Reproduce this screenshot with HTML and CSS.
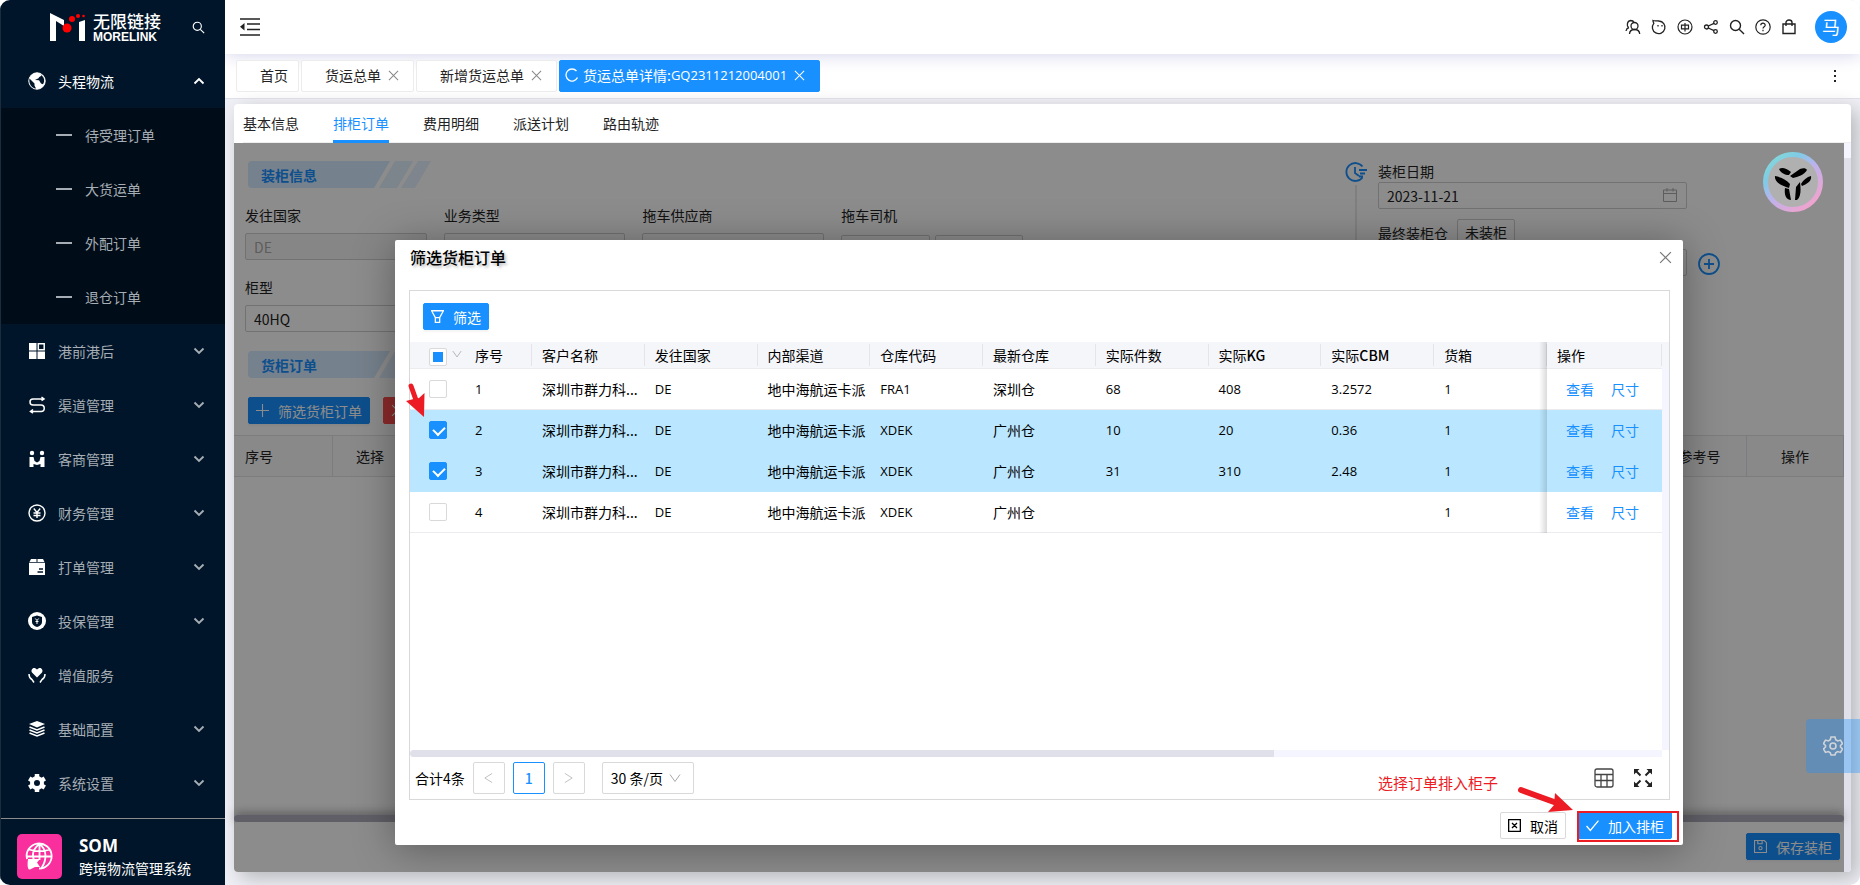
FILE: index.html
```html
<!DOCTYPE html>
<html lang="zh-CN">
<head>
<meta charset="utf-8">
<title>跨境物流管理系统</title>
<link rel="stylesheet" href="styles.css">
</head>
<body>
<!-- shared icons -->
<svg class="defs" aria-hidden="true">
  <symbol id="i-down" viewBox="0 0 12 12"><path d="M1.500 3.500 6 8l4.500-4.500" fill="none" stroke="currentColor" stroke-width="1.900"/></symbol>
  <symbol id="i-caret" viewBox="0 0 12 12"><path d="M1 2.500 6 9.500l5-7" fill="none" stroke="currentColor" stroke-width="1"/></symbol>
  <symbol id="i-close" viewBox="0 0 12 12"><path d="M1 1l10 10M11 1 1 11" fill="none" stroke="currentColor" stroke-width="1.100"/></symbol>
  <symbol id="i-search" viewBox="0 0 16 16"><g fill="none" stroke="currentColor" stroke-width="1.400"><circle cx="6.500" cy="6.500" r="5"/><path d="M10.200 10.200 15 15"/></g></symbol>
</svg>

<div class="app">
  <aside class="side">
    <div class="brand">
      <svg class="brand-mark" viewBox="0 0 36 28">
        <path d="M0 0 14 7v6L6 8v20H0zM29 9l6-2v21h-6z" fill="#fff"/>
        <circle cx="17" cy="15" r="4.500" fill="#f00"/><circle cx="22" cy="6" r="3" fill="#f00"/><circle cx="28" cy="3" r="2" fill="#f00"/><circle cx="33.500" cy="3" r="1.300" fill="#f00"/>
      </svg>
      <div class="brand-name"><strong>无限链接</strong><span>MORELINK</span></div>
      <svg class="brand-search"><use href="#i-search"/></svg>
    </div>

    <nav class="menu">
      <a href="#" class="item active">
        <svg class="ico" viewBox="0 0 18 18"><circle cx="9" cy="9" r="8.200" fill="#fff" stroke="#fff"/><path d="M10 1.200c2 .8 3 1.300 3.500 2-1 1.800-2.500 1.300-3 3L7 8l4 .3 2 3.200 2 .8c1.300-1.800 1.500-4.500.6-6.600L13 2.500zM1.500 6.500l5 5v2l1.500 3C3.500 16 .5 11.500 1.500 6.500z" fill="#001529"/></svg>
        <span>头程物流</span><svg class="arrow up"><use href="#i-down"/></svg>
      </a>
      <div class="sub">
        <a href="#">待受理订单</a>
        <a href="#">大货运单</a>
        <a href="#">外配订单</a>
        <a href="#">退仓订单</a>
      </div>
      <a href="#" class="item">
        <svg class="ico" viewBox="0 0 18 18"><path d="M1 1h7.500v7.500H1zM1 9.500h7.500V17H1zM9.500 9.500H17V17H9.500z" fill="#fff"/><path d="M10.300 1.800h5.900v5.900h-5.900z" fill="none" stroke="#fff" stroke-width="1.500"/></svg>
        <span>港前港后</span><svg class="arrow"><use href="#i-down"/></svg>
      </a>
      <a href="#" class="item">
        <svg class="ico" viewBox="0 0 18 18"><path d="M16 3H5a3 3 0 0 0 0 6h8a3 3 0 0 1 0 6.500H3M13.500 1 16 3l-2.500 1.500M5 13.500l-2.500 2L5 17" fill="none" stroke="#fff" stroke-width="1.500"/></svg>
        <span>渠道管理</span><svg class="arrow"><use href="#i-down"/></svg>
      </a>
      <a href="#" class="item">
        <svg class="ico" viewBox="0 0 18 18"><circle cx="4" cy="3" r="2.200" fill="#fff"/><circle cx="14" cy="3" r="2.200" fill="#fff"/><path d="M1.500 7h4l1 4L9 12.500l2.500-1.500 1-4h4v10h-4v-3L9 15l-3.500-1v3h-4z" fill="#fff"/></svg>
        <span>客商管理</span><svg class="arrow"><use href="#i-down"/></svg>
      </a>
      <a href="#" class="item">
        <svg class="ico" viewBox="0 0 18 18"><g fill="none" stroke="#fff" stroke-width="1.400"><circle cx="9" cy="9" r="8"/><path d="M5.800 4.500 9 8.500l3.200-4M9 8.500V14M5.500 9h7M5.500 11.500h7"/></g></svg>
        <span>财务管理</span><svg class="arrow"><use href="#i-down"/></svg>
      </a>
      <a href="#" class="item">
        <svg class="ico" viewBox="0 0 18 18"><path d="M3 1h5.500v3H1.500zM9.500 1H15l1.500 3h-7zM1 4.800h16V17H1z" fill="#fff"/><path d="M11 11h4M9.500 14H15" stroke="#001529" stroke-width="1.300"/></svg>
        <span>打单管理</span><svg class="arrow"><use href="#i-down"/></svg>
      </a>
      <a href="#" class="item">
        <svg class="ico" viewBox="0 0 18 18"><circle cx="9" cy="9" r="9" fill="#fff"/><path d="M9 3.500 14 5v5c0 2.500-2 4-5 5-3-1-5-2.500-5-5V5z" fill="#001529"/><path d="M7.300 6.500 9 8.500l1.700-2M9 8.500V12M7.500 9.500h3" stroke="#fff" fill="none"/></svg>
        <span>投保管理</span><svg class="arrow"><use href="#i-down"/></svg>
      </a>
      <a href="#" class="item">
        <svg class="ico" viewBox="0 0 18 18"><path d="M9 11.500 4 6.500c-1.500-2 .5-5.500 3.300-4.300L9 3.500l1.700-1.300C13.500 1 15.500 4.500 14 6.500z" fill="#fff"/><path d="M1 8c0 3 1 4.500 3 5.500l2 3M17 8c0 3-1 4.500-3 5.500l-2 3" fill="none" stroke="#fff" stroke-width="1.500"/></svg>
        <span>增值服务</span>
      </a>
      <a href="#" class="item">
        <svg class="ico" viewBox="0 0 18 18"><path d="M9 1l8 3-8 3.500L1 4z" fill="#fff"/><path d="M1.500 7 9 10l7.500-3M1.500 10 9 13l7.500-3M1.500 13 9 16l7.500-3" fill="none" stroke="#fff" stroke-width="1.500"/></svg>
        <span>基础配置</span><svg class="arrow"><use href="#i-down"/></svg>
      </a>
      <a href="#" class="item">
        <svg class="ico" viewBox="0 0 18 18"><circle cx="9" cy="9" r="5" fill="none" stroke="#fff" stroke-width="4"/><path d="M9 0v3.500M9 14.500V18M1.200 4.500l3 1.800M13.800 11.700l3 1.800M1.200 13.500l3-1.800M13.800 6.300l3-1.800" stroke="#fff" stroke-width="4.500"/></svg>
        <span>系统设置</span><svg class="arrow"><use href="#i-down"/></svg>
      </a>
    </nav>

    <div class="product">
      <svg class="product-icon" viewBox="0 0 45 45"><rect width="45" height="45" rx="5" fill="#f82f9c"/><g fill="none" stroke="#fff" stroke-width="1.800"><path d="M10 25a12.500 12.500 0 1 1 12 9.500M10 22.500h25M12 15.500c6 2 15 2 21 0M22.500 10v16M22.500 10c-7 5-8 12-5 17M22.500 10c7 5 8 15 2 24"/></g><path d="M11 25h12l-3 3.500 3 4.500-5 0-5 2.500c-2 .5-3-3-2-10.500z" fill="#fff"/></svg>
      <div><strong>SOM</strong><p>跨境物流管理系统</p></div>
    </div>
  </aside>

  <div class="main">
    <header class="top">
      <button class="icon-btn fold" aria-label="收起菜单">
        <svg viewBox="0 0 20 20"><path d="M0 2h20M7 7h13M7 12.500h13M0 18h20" stroke="currentColor" stroke-width="1.700"/><path d="M0 9.700 4.500 6v7.500z" fill="currentColor"/></svg>
      </button>
      <div class="tools">
        <svg viewBox="0 0 16 16"><g fill="none" stroke="currentColor" stroke-width="1.300"><circle cx="9.500" cy="7" r="3.500"/><path d="M4.500 15c.2-3 2-4.500 5-4.500s5 1.500 5.200 4.500M3.500 8.500C1.500 7 2 2 5.500 1.500c2 0 3 .5 3.500 2M1 12c.3-1.800 1.200-3 3-3.500"/></g></svg>
        <svg viewBox="0 0 16 16"><path d="M2 1.500c0 1.500.5 2 .8 2.800A6.300 6.300 0 1 0 8 2C6 1.500 4 2.300 2 1.500zM7 6v1.500M11 6v1.500" fill="none" stroke="currentColor" stroke-width="1.300"/></svg>
        <svg viewBox="0 0 16 16"><g fill="none" stroke="currentColor" stroke-width="1.200"><circle cx="8" cy="8" r="7"/><path d="M4.500 6.200h7v3.600h-7zM8 4v8.500"/></g></svg>
        <svg viewBox="0 0 16 16"><g fill="none" stroke="currentColor" stroke-width="1.300"><circle cx="3.500" cy="8" r="2"/><circle cx="12.500" cy="3.500" r="1.800"/><circle cx="12.500" cy="12.500" r="1.800"/><path d="M5.300 7 11 4.300M5.300 9l5.700 2.700"/></g></svg>
        <svg><use href="#i-search"/></svg>
        <svg viewBox="0 0 16 16"><g fill="none" stroke="currentColor" stroke-width="1.200"><circle cx="8" cy="8" r="7.200"/><path d="M5.800 6.300C5.800 3.500 10.200 3.500 10.200 6.200c0 1.600-2.200 1.500-2.200 3.300M8 10.800v1.400"/></g></svg>
        <svg viewBox="0 0 16 16"><path d="M2 5h12v9.500H2zM5 7V3.500a3 2.500 0 0 1 6 0V7" fill="none" stroke="currentColor" stroke-width="1.400"/></svg>
      </div>
      <span class="avatar">马</span>
    </header>

    <nav class="pages">
      <a href="#" class="page">首页</a>
      <a href="#" class="page">货运总单<svg class="x"><use href="#i-close"/></svg></a>
      <a href="#" class="page">新增货运总单<svg class="x"><use href="#i-close"/></svg></a>
      <a href="#" class="page current"><svg class="reload" viewBox="0 0 14 14"><path d="M11.500 3A6 6 0 1 0 12.500 9.500" fill="none" stroke="currentColor" stroke-width="1.300"/></svg>货运总单详情:<span class="num">GQ2311212004001</span><svg class="x"><use href="#i-close"/></svg></a>
      <button class="icon-btn more" aria-label="更多"><svg viewBox="0 0 4 14"><path d="M1 1h2v2H1zM1 6h2v2H1zM1 11h2v2H1z" fill="currentColor"/></svg></button>
    </nav>

    <section class="card">
      <nav class="tabs">
        <a href="#">基本信息</a>
        <a href="#" class="on">排柜订单</a>
        <a href="#">费用明细</a>
        <a href="#">派送计划</a>
        <a href="#">路由轨迹</a>
      </nav>
      <div class="panel-row">
      <div class="panel">
        <div class="content">
          <div class="info">
            <div class="info-left">
              <h2 class="ribbon"><svg viewBox="0 0 184 27"><path d="M4 0h138l-16 27H4a4 4 0 0 1-4-4V4a4 4 0 0 1 4-4z" fill="#d6ebff"/><path d="M147 0h18l-16 27h-18z" fill="#e2f0ff"/><path d="M170 0h13l-16 27h-14z" fill="#e8f3ff"/></svg><span>装柜信息</span></h2>
              <div class="fields">
                <div class="field"><label for="country">发往国家</label><input id="country" value="DE" disabled></div>
                <div class="field"><label for="biz">业务类型</label><input id="biz"></div>
                <div class="field"><label for="truck">拖车供应商</label><input id="truck"></div>
                <div class="field"><label for="driver">拖车司机</label><div class="pair"><input id="driver"><input aria-label="司机电话"></div></div>
                <div class="field"><label for="box">柜型</label><input id="box" value="40HQ"></div>
              </div>
            </div>
            <div class="steps">
              <div class="rail">
                <svg viewBox="0 0 22 22"><g fill="none" stroke="#1890ff" stroke-width="1.800"><path d="M17.500 5.500A9 9 0 1 0 17.500 16.500M10 6v6l4 3M14 9h8M15 12.500h5M14 15.500h4"/></g></svg>
              </div>
              <div class="step-body">
                <label for="date">装柜日期</label>
                <div class="date"><input id="date" value="2023-11-21"><svg viewBox="0 0 14 14"><path d="M.5 2h13v11.500H.500zM.5 5.500h13M4 0v3.500M10 0v3.500" fill="none" stroke="#aaa"/></svg></div>
                <div class="state"><label for="wh">最终装柜仓</label><span class="tag">未装柜</span></div>
                <input id="wh">
              </div>
              <button class="icon-btn add" aria-label="新增"><svg viewBox="0 0 22 22"><g fill="none" stroke="#1890ff" stroke-width="1.800"><circle cx="11" cy="11" r="10"/><path d="M11 6v10M6 11h10"/></g></svg></button>
            </div>
          </div>
          <h2 class="ribbon"><svg viewBox="0 0 184 27"><path d="M4 0h138l-16 27H4a4 4 0 0 1-4-4V4a4 4 0 0 1 4-4z" fill="#d6ebff"/><path d="M147 0h18l-16 27h-18z" fill="#e2f0ff"/><path d="M170 0h13l-16 27h-14z" fill="#e8f3ff"/></svg><span>货柜订单</span></h2>
          <div class="actions">
            <button class="btn primary"><svg viewBox="0 0 12 12"><path d="M6 0v12M0 6h12" stroke="currentColor"/></svg>筛选货柜订单</button>
            <button class="btn danger"><svg><use href="#i-close"/></svg>移除</button>
          </div>
          <table class="orders">
            <tr><th class="c-no">序号</th><th class="c-pick">选择</th><th></th><th class="c-ref">参考号</th><th class="c-op">操作</th></tr>
          </table>
        </div>
        <div class="hbar"></div>
        <footer class="bar">
          <button class="btn primary"><svg viewBox="0 0 12 12"><path d="M.5.5h9l2 2v9H.500zM3.500.5v3h4v-3" fill="none" stroke="currentColor"/><circle cx="6" cy="7.500" r="1.500" fill="none" stroke="currentColor"/></svg>保存装柜</button>
        </footer>

        <div class="mask">
          <div class="modal" role="dialog" aria-labelledby="dlg-title">
            <div class="modal-head">
              <h3 id="dlg-title">筛选货柜订单</h3>
              <button class="icon-btn" aria-label="关闭"><svg><use href="#i-close"/></svg></button>
            </div>
            <div class="box">
              <div class="box-tools">
                <button class="btn primary"><svg viewBox="0 0 12 12"><path d="M.5.700h11L8 7H4zM4 7v4.500h4V7" fill="none" stroke="currentColor" stroke-width="1.200"/></svg>筛选</button>
              </div>
              <div class="grid">
                <div class="grid-scroll">
                <table class="list">
                  <thead>
                    <tr><th class="w-check"><input type="checkbox" class="some" aria-label="全选"><svg class="caret"><use href="#i-caret"/></svg></th><th class="w-no">序号</th><th>客户名称</th><th>发往国家</th><th>内部渠道</th><th>仓库代码</th><th>最新仓库</th><th>实际件数</th><th>实际<b>KG</b></th><th>实际<b>CBM</b></th><th>货箱</th><th class="w-op">操作</th></tr>
                  </thead>
                  <tbody>
                    <tr><td><input type="checkbox" aria-label="选择 1"></td><td class="num">1</td><td>深圳市群力科...</td><td class="num">DE</td><td>地中海航运卡派</td><td class="num">FRA1</td><td>深圳仓</td><td class="num">68</td><td class="num">408</td><td class="num">3.2572</td><td class="num">1</td><td class="op"><a href="#">查看</a><a href="#">尺寸</a></td></tr>
                    <tr class="picked"><td><input type="checkbox" aria-label="选择 2" checked></td><td class="num">2</td><td>深圳市群力科...</td><td class="num">DE</td><td>地中海航运卡派</td><td class="num">XDEK</td><td>广州仓</td><td class="num">10</td><td class="num">20</td><td class="num">0.36</td><td class="num">1</td><td class="op"><a href="#">查看</a><a href="#">尺寸</a></td></tr>
                    <tr class="picked"><td><input type="checkbox" aria-label="选择 3" checked></td><td class="num">3</td><td>深圳市群力科...</td><td class="num">DE</td><td>地中海航运卡派</td><td class="num">XDEK</td><td>广州仓</td><td class="num">31</td><td class="num">310</td><td class="num">2.48</td><td class="num">1</td><td class="op"><a href="#">查看</a><a href="#">尺寸</a></td></tr>
                    <tr><td><input type="checkbox" aria-label="选择 4"></td><td class="num">4</td><td>深圳市群力科...</td><td class="num">DE</td><td>地中海航运卡派</td><td class="num">XDEK</td><td>广州仓</td><td></td><td></td><td></td><td class="num">1</td><td class="op"><a href="#">查看</a><a href="#">尺寸</a></td></tr>
                  </tbody>
                </table>
                <div class="grid-hbar"></div>
                </div>
                <div class="grid-vbar"></div>
              </div>
              <div class="pager">
                <span>合计4条</span>
                <button class="pg" aria-label="上一页"><svg viewBox="0 0 12 12"><path d="M10 1 2 6l8 5" fill="none" stroke="#bbb"/></svg></button>
                <button class="pg on">1</button>
                <button class="pg" aria-label="下一页"><svg viewBox="0 0 12 12"><path d="M2 1l8 5-8 5" fill="none" stroke="#bbb"/></svg></button>
                <div class="size"><select aria-label="每页条数"><option>30 条/页</option></select><svg><use href="#i-caret"/></svg></div>
                <svg class="cols" viewBox="0 0 20 20"><path d="M3 1h14a2 2 0 0 1 2 2v14a2 2 0 0 1-2 2H3a2 2 0 0 1-2-2V3a2 2 0 0 1 2-2zM1 6.500h18M1 12.500h18M7 6.500V19M13 6.500V19" fill="none" stroke="#444" stroke-width="1.300"/></svg>
                <svg class="full" viewBox="0 0 20 20"><path d="M2 2l5.500 5.500M18 2l-5.500 5.500M2 18l5.500-5.500M18 18l-5.500-5.500" stroke="#222" stroke-width="2"/><path d="M1 1h5.500L1 6.500zM19 1v5.500L13.500 1zM1 19v-5.500L6.500 19zM19 19h-5.500l5.500-5.500z" fill="#222"/></svg>
              </div>
            </div>
            <div class="modal-foot">
              <button class="btn"><svg viewBox="0 0 12 12"><path d="M.6.600h10.800v10.800H.600zM3.700 3.700l4.600 4.600M8.300 3.700 3.700 8.300" fill="none" stroke="currentColor" stroke-width="1.200"/></svg>取消</button>
              <button class="btn primary"><svg viewBox="0 0 12 12"><path d="M.5 6.500 4 10.500 11.500 1.500" fill="none" stroke="currentColor" stroke-width="1.200"/></svg>加入排柜</button>
            </div>
            <!-- guide marks -->
            <svg class="mark mark-pick" viewBox="0 0 20 36"><path d="M5 4 10 18" stroke="#ed1c24" stroke-width="5" stroke-linecap="round"/><path d="M0 19 7.500 17 13 16 18.500 11 18 35z" fill="#ed1c24"/></svg>
            <span class="mark mark-text">选择订单排入柜子</span>
            <svg class="mark mark-add" viewBox="0 0 60 30"><path d="M7 6 40 18" stroke="#ed1c24" stroke-width="6" stroke-linecap="round"/><path d="M41 9 59 26 34 28 40 21z" fill="#ed1c24"/></svg>
            <span class="mark mark-frame"></span>
          </div>
        </div>
        <svg class="float-logo" viewBox="0 0 60 60">
          <defs><linearGradient id="ring" x1="0" y1="0" x2=".8" y2="1"><stop offset="0" stop-color="#86dcd4"/><stop offset=".3" stop-color="#7fcbe6"/><stop offset=".55" stop-color="#bdb2ec"/><stop offset="1" stop-color="#f4a2cc"/></linearGradient></defs>
          <circle cx="30" cy="30" r="27.500" fill="#b0b0b0" stroke="url(#ring)" stroke-width="5"/>
          <path d="M16 17c3-2 7-1 12 3l-2 3c-4 0-8-2-10-6zM27 24l10-7c3-1 6-1 7 1-3 5-9 7-14 8zM12 24c6 1 12 4 15 8l-1 4c-7-2-15-6-14-12zM38 32c2-4 6-7 10-8 1 5-4 8-9 10zM22 36l4 1 2 11c-5 0-7-5-6-12zM33 35l4-5c1 8 1 15-3 18h-2z" fill="#000"/>
        </svg>
      </div>
      <div class="vbar"></div>
      </div>
    </section>
    <button class="setting" aria-label="设置"><svg viewBox="0 0 20 20"><path d="M8 1h4l.7 2.700 2 1.200 2.800-.8 2 3.400-2 2v1.500l2 2-2 3.400-2.800-.8-2 1.200L12 19H8l-.7-2.200-2-1.200-2.800.8-2-3.400 2-2V9.500l-2-2 2-3.400 2.800.8 2-1.200z" fill="none" stroke="currentColor" stroke-width="1.600"/><circle cx="10" cy="10" r="3" fill="none" stroke="currentColor" stroke-width="1.600"/></svg></button>
  </div>
</div>
</body>
</html>
```

FILE: styles.css
```css
* {
    box-sizing: border-box;
}
body {
    margin: 0;
    background: #fff;
    color: #222;
    font: 14px/20px "Noto Sans CJK SC", sans-serif;
}
h2, h3, p {
    margin: 0;
}
a {
    color: inherit;
    text-decoration: none;
}
button, input, select {
    font: inherit;
    color: inherit;
}
svg {
    display: block;
    flex: none;
}
.defs {
    position: absolute;
    width: 0;
    height: 0;
}
.num {
    font-family: "Open Sans", "Noto Sans CJK SC", sans-serif;
    font-size: 13px;
}
.icon-btn {
    padding: 0;
    border: 0;
    background: none;
}
.app {
    display: flex;
    height: 100vh;
    overflow: hidden;
    border-radius: 10px;
    background: #f0f0f7;
}

/* sidebar */
.side {
    display: flex;
    flex-direction: column;
    flex: none;
    width: 225px;
    border-left: 1px solid #1b2c3d;
    background: #001529;
    color: #fff;
    position: relative;
    z-index: 3;
}
.brand {
    display: flex;
    align-items: center;
    height: 54px;
    padding: 0 20px 0 49px;
}
.brand-mark {
    width: 36px;
    height: 28px;
    margin-right: 7px;
}
.brand-name strong, .brand-name span {
    display: block;
}
.brand-name strong {
    font-size: 17px;
    font-weight: 500;
    line-height: 20px;
}
.brand-name span {
    font: bold 12px/12px "Liberation Sans", sans-serif;
}
.brand-search {
    width: 13px;
    height: 13px;
    margin-left: auto;
}
.menu {
    flex: 1;
}
.item {
    display: flex;
    align-items: center;
    gap: 12px;
    height: 54px;
    padding: 0 20px 0 27px;
    color: #a6adb4;
}
.item.active {
    color: #fff;
}
.ico {
    width: 18px;
    height: 18px;
}
.arrow {
    width: 12px;
    height: 12px;
    margin-left: auto;
}
.arrow.up {
    transform: rotate(180deg);
}
.sub {
    background: #000c17;
}
.sub a {
    display: flex;
    align-items: center;
    gap: 13px;
    height: 54px;
    padding-left: 55px;
    color: #a6adb4;
}
.sub a::before {
    content: "";
    width: 16px;
    height: 2px;
    background: #a6adb4;
}
.product {
    display: flex;
    align-items: center;
    gap: 17px;
    height: 67px;
    padding: 8px 0 0 16px;
    border-top: 1px solid #8c8c8c;
}
.product-icon {
    width: 45px;
    height: 45px;
}
.product strong {
    display: block;
    font: bold 17px/24px "Open Sans", sans-serif;
}

/* top bars */
.main {
    display: flex;
    flex-direction: column;
    flex: 1;
    min-width: 0;
    position: relative;
}
.top {
    display: flex;
    align-items: center;
    height: 54px;
    padding: 0 13px 0 15px;
    background: #fff;
    box-shadow: 0 2px 16px #d8d8ee;
    position: relative;
    z-index: 1;
}
.fold svg {
    width: 20px;
    height: 20px;
}
.tools {
    display: flex;
    gap: 10px;
    margin: 0 18px 0 auto;
}
.tools svg {
    width: 16px;
    height: 16px;
}
.avatar {
    width: 32px;
    height: 32px;
    border-radius: 50%;
    background: #1890ff;
    color: #fff;
    font-size: 18px;
    line-height: 30px;
    text-align: center;
}
.pages {
    display: flex;
    align-items: center;
    gap: 2px;
    height: 45px;
    padding: 0 23px 0 11px;
    border-bottom: 1px solid #e1e1ec;
    background: #fff;
}
.page {
    display: flex;
    align-items: center;
    height: 32px;
    padding: 0 10px 2px 23px;
    border: 1px solid #ececec;
    border-radius: 2px;
    background: #fff;
    position: relative;
    z-index: 2;
}
.page .x {
    width: 11px;
    height: 11px;
    margin: 0 4px 0 7px;
    color: #888;
}
.page.current {
    padding-left: 5px;
    border-color: #1890ff;
    background: #1890ff;
    color: #fff;
}
.page.current .x {
    color: #fff;
}
.reload {
    width: 14px;
    height: 14px;
    margin-right: 4px;
}
.more {
    margin-left: auto;
}
.more svg {
    width: 4px;
    height: 14px;
}

/* card */
.card {
    display: flex;
    flex-direction: column;
    flex: 1;
    min-height: 0;
    margin: 5px 9px 13px;
    border-radius: 4px;
    background: #fff;
    box-shadow: 6px 6px 20px #b4b6b8;
}
.tabs {
    display: flex;
    gap: 34px;
    height: 39px;
    margin-left: 9px;
    border-bottom: 1px solid #eee;
}
.tabs a {
    height: 39px;
    line-height: 38px;
}
.tabs .on {
    border-bottom: 3px solid #1890ff;
    color: #1890ff;
}
.panel-row {
    display: flex;
    flex: 1;
    min-height: 0;
}
.panel {
    display: flex;
    flex-direction: column;
    flex: 1;
    min-width: 0;
    position: relative;
}
.vbar {
    width: 7px;
    border-radius: 0 0 4px 0;
    background: linear-gradient(#f5f5ff 15px, #e0e0eb 15px);
}
.content {
    flex: 1;
    min-height: 0;
    overflow: hidden;
    padding-top: 18px;
}
.info {
    display: flex;
    justify-content: space-between;
}
.info-left {
    width: 49%;
}
.ribbon {
    display: grid;
    align-items: center;
    width: 184px;
    margin-left: 14px;
    color: #1890ff;
    font-size: 14px;
}
.ribbon svg, .ribbon span {
    grid-area: 1 / 1;
}
.ribbon svg {
    height: 27px;
}
.ribbon span {
    padding-left: 13px;
}
.fields {
    display: grid;
    grid-template-columns: repeat(4, 1fr);
    gap: 17px;
    margin: 17px 0 19px;
    padding-left: 11px;
}
.field {
    height: 55px;
}
.field label {
    display: block;
    margin-bottom: 8px;
}
.panel input:not([type]) {
    display: block;
    width: 100%;
    height: 27px;
    padding: 0 8px;
    border: 1px solid #d0d0d0;
    border-radius: 2px;
    background: #fff;
}
.panel input:disabled {
    background: #f5f5f5;
    color: #aaa;
}
.pair {
    display: flex;
    gap: 5px;
    padding-top: 2px;
}
.steps {
    display: flex;
    gap: 11px;
    width: 31%;
}
.rail {
    display: flex;
    flex-direction: column;
    align-items: center;
    gap: 2px;
    width: 22px;
}
.rail svg {
    width: 22px;
    height: 22px;
}
.rail::after {
    content: "";
    flex: 1;
    width: 2px;
    background: #e8e8e8;
}
.step-body {
    flex: 0 0 62%;
}
.step-body label {
    display: block;
}
.date {
    margin-top: 1px;
    position: relative;
}
.date svg {
    position: absolute;
    right: 10px;
    top: 6px;
    width: 14px;
    height: 14px;
}
.state {
    display: flex;
    align-items: center;
    gap: 9px;
    margin: 10px 0 3px;
}
.tag {
    padding: 2px 7px 3px;
    border: 1px solid #d0d0d0;
    border-radius: 2px;
}
.add {
    align-self: flex-start;
    padding-top: 92px;
}
.add svg {
    width: 22px;
    height: 22px;
}
.actions {
    display: flex;
    gap: 13px;
    margin: 19px 0 11px 14px;
}
.btn {
    display: inline-flex;
    align-items: center;
    gap: 9px;
    height: 27px;
    padding: 0 7px;
    border: 1px solid #d9d9d9;
    border-radius: 2px;
    background: #fff;
    white-space: nowrap;
}
.btn svg {
    width: 13px;
    height: 13px;
}
.btn.primary {
    border-color: #1890ff;
    background: #1890ff;
    color: #fff;
    box-shadow: 0 2px 2px #0000000c;
}
.btn.danger {
    border-color: #ff4d4f;
    background: #ff4d4f;
    color: #fff;
}
.orders {
    width: 100%;
    table-layout: fixed;
    border-collapse: collapse;
}
.orders th {
    height: 41px;
    padding: 0;
    border: 1px solid #e2e2e8;
    border-width: 1px 1px 1px 0;
    background: #fafafa;
    font-weight: normal;
}
.orders .c-no {
    width: 98px;
    padding-left: 11px;
    text-align: left;
}
.orders .c-pick {
    width: 76px;
}
.orders .c-ref {
    width: 94px;
}
.orders .c-op {
    width: 97px;
}
.hbar {
    height: 7px;
    border-radius: 4px;
    background: #b0aebc;
    box-shadow: 0 -2px 10px #999;
}
.bar {
    display: flex;
    justify-content: flex-end;
    height: 50px;
    padding: 11px 4px 0;
    border-radius: 4px 4px 0 4px;
    background: #fff;
}

/* dialog */
.mask {
    position: absolute;
    inset: 0;
    display: flex;
    justify-content: center;
    overflow: hidden;
    padding: 97px 0 27px;
    border-radius: 0 0 0 4px;
    background: rgba(0, 0, 0, .45);
}
.modal {
    display: flex;
    flex-direction: column;
    width: 80%;
    border-radius: 2px;
    background: #fff;
    box-shadow: 0 4px 40px rgba(0, 0, 0, .35);
    color: #000;
    position: relative;
}
.modal-head {
    display: flex;
    align-items: center;
    justify-content: space-between;
    height: 34px;
    margin-bottom: 16px;
    padding: 0 11px 0 15px;
}
.modal-head h3 {
    font-size: 16px;
    font-weight: 500;
    text-shadow: 2px 2px 3px #bbb;
}
.modal-head svg {
    width: 13px;
    height: 13px;
    color: #777;
}
.box {
    display: flex;
    flex-direction: column;
    flex: 1;
    min-height: 0;
    margin: 0 13px 0 14px;
    border: 1px solid #d9d9d9;
}
.box-tools {
    height: 51px;
    padding: 12px 13px;
}
.grid {
    display: flex;
    flex: 1;
    min-height: 0;
}
.grid-scroll {
    display: flex;
    flex-direction: column;
    justify-content: space-between;
    flex: 1;
    min-width: 0;
}
.grid-vbar {
    width: 7px;
    margin-bottom: 7px;
    background: linear-gradient(#f5f6fa 27px, #f5f5ff 27px);
}
.grid-hbar {
    height: 7px;
    border-radius: 4px 0 0 4px;
    background: linear-gradient(90deg, #e0e0eb 69%, #f5f5ff 69%);
}
.list {
    width: 100%;
    table-layout: fixed;
    border-spacing: 0;
}
.list th, .list td {
    height: 41px;
    padding: 0 0 0 10px;
    border-bottom: 1px solid #ececf0;
    text-align: left;
    white-space: nowrap;
    position: relative;
}
.list th {
    height: 27px;
    background: #f5f6fa;
    font-weight: normal;
}
.list th b {
    font-weight: 500;
}
.list th:not(.w-check)::after {
    content: "";
    position: absolute;
    top: 2px;
    right: 0;
    width: 1px;
    height: 22px;
    background: #e4e4ea;
}
.list .w-check {
    width: 55px;
}
.list .w-no {
    width: 67px;
}
.list .w-op {
    width: 115px;
}
.list th:first-child, .list td:first-child {
    padding-left: 19px;
}
.list .w-check input, .list .caret {
    display: inline-block;
}
.list .caret {
    width: 10px;
    height: 12px;
    margin-left: 5px;
    color: #aaa;
}
.picked td {
    border-color: #bae7ff;
    background: #bae7ff;
}
.list .op {
    padding-left: 19px;
    color: #1890ff;
}
.op a + a {
    margin-left: 17px;
}
.list .w-op::before, .list .op::before {
    content: "";
    position: absolute;
    top: 0;
    bottom: -1px;
    left: -8px;
    width: 8px;
    background: linear-gradient(90deg, transparent, rgba(0, 0, 0, .14));
}
.list input {
    display: block;
    width: 18px;
    height: 18px;
    margin: 0;
    border: 1px solid #d9d9d9;
    border-radius: 2px;
    background: #fff;
    appearance: none;
    vertical-align: middle;
    position: relative;
}
.list input:checked {
    border-color: #1890ff;
    background: #1890ff;
}
.list input:checked::after {
    content: "";
    position: absolute;
    top: 2px;
    left: 5px;
    width: 6px;
    height: 9px;
    border: solid #fff;
    border-width: 0 2px 2px 0;
    transform: rotate(45deg);
}
.list .some::after {
    content: "";
    position: absolute;
    inset: 3px;
    background: #1890ff;
}
.pager {
    display: flex;
    align-items: center;
    height: 42px;
    padding: 0 16px 0 5px;
}
.pg {
    display: grid;
    place-items: center;
    width: 32px;
    height: 32px;
    margin-left: 8px;
    padding: 0;
    border: 1px solid #d9d9d9;
    border-radius: 2px;
    background: #fff;
}
.pg svg {
    width: 11px;
    height: 12px;
}
.pg.on {
    border-color: #1890ff;
    color: #1890ff;
    font-weight: 500;
}
.size {
    margin-left: 17px;
    position: relative;
}
.size select {
    width: 92px;
    height: 32px;
    padding: 0 8px;
    border: 1px solid #d9d9d9;
    border-radius: 2px;
    background: #fff;
    appearance: none;
}
.size svg {
    position: absolute;
    top: 10px;
    right: 13px;
    width: 12px;
    height: 12px;
    color: #aaa;
}
.cols {
    width: 20px;
    height: 20px;
    margin: 0 19px 0 auto;
}
.full {
    width: 20px;
    height: 20px;
}
.modal-foot {
    display: flex;
    justify-content: flex-end;
    gap: 12px;
    height: 45px;
    padding: 12px 11px 0;
}

/* guide marks over the dialog */
.mark {
    position: absolute;
}
.mark-pick {
    left: 11px;
    top: 142px;
    width: 20px;
    height: 36px;
}
.mark-text {
    right: 185px;
    bottom: 52px;
    color: #ed1c24;
    font-size: 15px;
}
.mark-add {
    right: 109px;
    bottom: 31px;
    width: 60px;
    height: 30px;
}
.mark-frame {
    right: 4px;
    bottom: 3px;
    width: 102px;
    height: 31px;
    border: 2px solid #ed1c24;
}
.float-logo {
    position: absolute;
    top: 9px;
    right: 21px;
    width: 60px;
    height: 60px;
}
.setting {
    display: grid;
    place-items: center;
    position: absolute;
    right: 0;
    bottom: 112px;
    width: 54px;
    height: 54px;
    padding: 0;
    border: 0;
    border-radius: 4px 0 0 4px;
    background: rgba(24, 144, 255, .35);
    color: #d0d4da;
}
.setting svg {
    width: 20px;
    height: 20px;
}
```
